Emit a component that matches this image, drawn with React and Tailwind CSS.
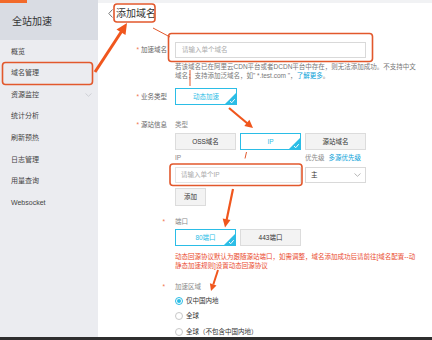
import React from "react";

const navItems = ["概览", "域名管理", "资源监控", "统计分析", "刷新预热", "日志管理", "用量查询", "Websocket"];

const Check = () => (
  <span className="absolute right-0 bottom-0 w-[11px] h-[11px]">
    <svg viewBox="0 0 11 11" className="w-full h-full">
      <path d="M11 0 L11 11 L0 11 Z" fill="#2bbde6" />
      <path d="M5 8.2 L6.8 9.7 L9.7 6.2" stroke="#fff" strokeWidth="1" fill="none" />
    </svg>
  </span>
);

const OptButton = ({ children, active, className = "" }) => (
  <div
    className={`relative flex items-center justify-center w-[61px] text-[6.5px] ${
      active ? "border border-[#2bbde6] bg-white text-[#2bbde6]" : "border border-[#dcdcdc] bg-[#f3f3f3] text-[#333]"
    } ${className}`}
  >
    {children}
    {active && <Check />}
  </div>
);

const Label = ({ children, className = "" }) => (
  <div className={`w-[70px] shrink-0 flex items-center justify-end pr-[1px] text-[6.5px] text-[#666] ${className}`}>
    <span className="text-[#f0704e] mr-[2px]">*</span>
    {children}
  </div>
);

const Radio = ({ checked, children }) => (
  <div className="flex items-center h-[15.5px] text-[6.5px] text-[#333]">
    <span
      className={`w-[8px] h-[8px] rounded-full border flex items-center justify-center ${
        checked ? "border-[#2bbde6]" : "border-[#c8c8c8]"
      }`}
    >
      {checked && <span className="w-[4px] h-[4px] rounded-full bg-[#2bbde6]" />}
    </span>
    <span className="ml-[3px]">{children}</span>
  </div>
);

// the red boxes and arrows drawn on top of the screenshot
const Annotations = () => (
  <svg className="absolute inset-0 pointer-events-none" width="432" height="340" viewBox="0 0 432 340">
    <g fill="none" stroke="#e2582c" strokeWidth="1.6">
      <rect x="2.5" y="62.5" width="90" height="22" rx="3" />
      <rect x="114" y="4" width="41" height="18" rx="3" />
      <rect x="168.5" y="33.5" width="204" height="28" rx="3" />
      <rect x="170" y="164" width="132" height="21.5" rx="3" />
    </g>
    <g stroke="#e2582c" strokeWidth="1">
      <line x1="153" y1="28" x2="170" y2="37" />
      <line x1="190" y1="70" x2="190" y2="86" />
      <line x1="246.5" y1="152" x2="245" y2="158.5" />
    </g>
    <g stroke="#f0561d" fill="#f0561d">
      <line x1="95" y1="72" x2="121.5" y2="31.5" strokeWidth="3" />
      <polygon points="127,23 125.5,35 116.5,29.5" stroke="none" />
      <line x1="229" y1="108" x2="247.5" y2="123.5" strokeWidth="2.2" />
      <polygon points="253,128 244.3,126 249.4,119.8" stroke="none" />
      <line x1="233" y1="189" x2="226.6" y2="220" strokeWidth="2.2" />
      <polygon points="225,227.5 230.5,220 222.7,218.4" stroke="none" />
      <line x1="218" y1="270" x2="213.3" y2="284.5" strokeWidth="2" />
      <polygon points="211,291 216.5,285.5 209.9,283.3" stroke="none" />
    </g>
  </svg>
);

export default function App() {
  return (
    <div className="relative w-[432px] h-[340px] flex flex-col overflow-hidden bg-white font-['Liberation_Sans','Noto_Sans_CJK_SC',sans-serif]">
      <div className="flex flex-1 min-h-0">
        <aside className="w-[98px] shrink-0 bg-[#ebecf0] flex flex-col">
          <div className="h-[40px] bg-[#d9dce3] flex flex-col">
            <div className="h-[3px] w-[27px] bg-[#f26a2a]" />
            <div className="flex-1 flex items-center pl-[12px] text-[10px] text-[#333]">全站加速</div>
          </div>
          <nav className="pt-[1px]">
            {navItems.map((item) => (
              <div key={item} className="h-[21.6px] flex items-center justify-between pl-[11px] pr-[6px] text-[7px] text-[#444]">
                <span>{item}</span>
                {item === "资源监控" && (
                  <svg width="7" height="4" viewBox="0 0 7 4">
                    <path d="M0.5 0.5 L3.5 3.3 L6.5 0.5" stroke="#c4c6cc" strokeWidth="0.7" fill="none" />
                  </svg>
                )}
              </div>
            ))}
          </nav>
        </aside>

        <main className="flex-1 min-w-0 border-t-[3px] border-[#f1f2f4] bg-white">
          <div className="h-[20px] flex items-center pl-[10px]">
            <svg width="5" height="9" viewBox="0 0 5 9">
              <path d="M4.5 0.5 L0.8 4.5 L4.5 8.5" stroke="#666" fill="none" strokeWidth="0.9" />
            </svg>
            <span className="ml-[3px] text-[10px] text-[#333]">添加域名</span>
          </div>

          <div className="flex mt-[19px]">
            <Label className="h-[16px]">加速域名</Label>
            <div className="ml-[7px]">
              <div className="w-[191px] h-[16px] border border-[#d9d9d9] flex items-center pl-[6px] text-[6.5px] text-[#aaa]">
                请输入单个域名
              </div>
              <p className="mt-[4px] text-[6.5px] leading-[9px] text-[#777] whitespace-nowrap">
                若该域名已在阿里云CDN平台或者DCDN平台中存在，则无法添加成功。不支持中文
                <br />
                域名；支持添加泛域名，如" *.test.com "，<span className="text-[#0aa1d8]">了解更多</span>。
              </p>
            </div>
          </div>

          <div className="flex mt-[8px]">
            <Label className="h-[17px]">业务类型</Label>
            <div className="ml-[7px]">
              <OptButton active className="h-[17px] w-[62px]">动态加速</OptButton>
            </div>
          </div>

          <div className="flex mt-[15px]">
            <Label className="h-[10px]">源站信息</Label>
            <div className="ml-[7px] text-[6.5px]">
              <div className="h-[10px] leading-[10px] text-[#888]">类型</div>
              <div className="flex gap-[4px] mt-[3px]">
                <OptButton className="h-[17px]">OSS域名</OptButton>
                <OptButton active className="h-[17px]">IP</OptButton>
                <OptButton className="h-[17px]">源站域名</OptButton>
              </div>
              <div className="flex mt-[3px] h-[10px] leading-[10px]">
                <span className="w-[130px] text-[#888]">IP</span>
                <span className="text-[#888]">优先级</span>
                <span className="ml-[4px] text-[#0aa1d8]">多源优先级</span>
              </div>
              <div className="flex gap-[4px] mt-[4px]">
                <div className="w-[126px] h-[16px] border border-[#e5e5e5] flex items-center pl-[5px] text-[#aaa]">请输入单个IP</div>
                <div className="w-[61px] h-[16px] border border-[#d9d9d9] flex items-center justify-between pl-[5px] pr-[4px] text-[#333]">
                  <span>主</span>
                  <svg width="7" height="4" viewBox="0 0 7 4">
                    <path d="M0.5 0.5 L3.5 3.3 L6.5 0.5" stroke="#999" strokeWidth="0.7" fill="none" />
                  </svg>
                </div>
              </div>
              <div className="mt-[5px] w-[31px] h-[18px] border border-[#dcdcdc] bg-[#f3f3f3] flex items-center justify-center text-[#333]">
                添加
              </div>
            </div>
          </div>

          <div className="flex mt-[11px]">
            <div className="w-[70px] shrink-0 h-[10px] flex items-center justify-end pr-[3px] text-[6.5px] text-[#f0704e]">*</div>
            <div className="ml-[7px] text-[6.5px]">
              <div className="h-[10px] leading-[10px] text-[#888]">端口</div>
              <div className="flex gap-[4px] mt-[2px]">
                <OptButton active className="h-[17px]">80端口</OptButton>
                <OptButton className="h-[17px]">443端口</OptButton>
              </div>
              <p className="mt-[6px] leading-[9px] text-[#ea4a2e] whitespace-nowrap">
                动态回源协议默认为跟随源站端口，如需调整，域名添加成功后请前往[域名配置--动
                <br />
                静态加速规则]设置动态回源协议
              </p>
            </div>
          </div>

          <div className="flex mt-[12px]">
            <div className="w-[70px] shrink-0 h-[10px] flex items-center justify-end pr-[3px] text-[6.5px] text-[#f0704e]">*</div>
            <div className="ml-[7px]">
              <div className="h-[10px] leading-[10px] text-[6.5px] text-[#888]">加速区域</div>
              <div className="mt-[1px]">
                <Radio checked>仅中国内地</Radio>
                <Radio>全球</Radio>
                <Radio>全球（不包含中国内地）</Radio>
              </div>
            </div>
          </div>
        </main>
      </div>
      <div className="h-[3px] shrink-0 bg-[#2e2e2e]" />
      <Annotations />
    </div>
  );
}
